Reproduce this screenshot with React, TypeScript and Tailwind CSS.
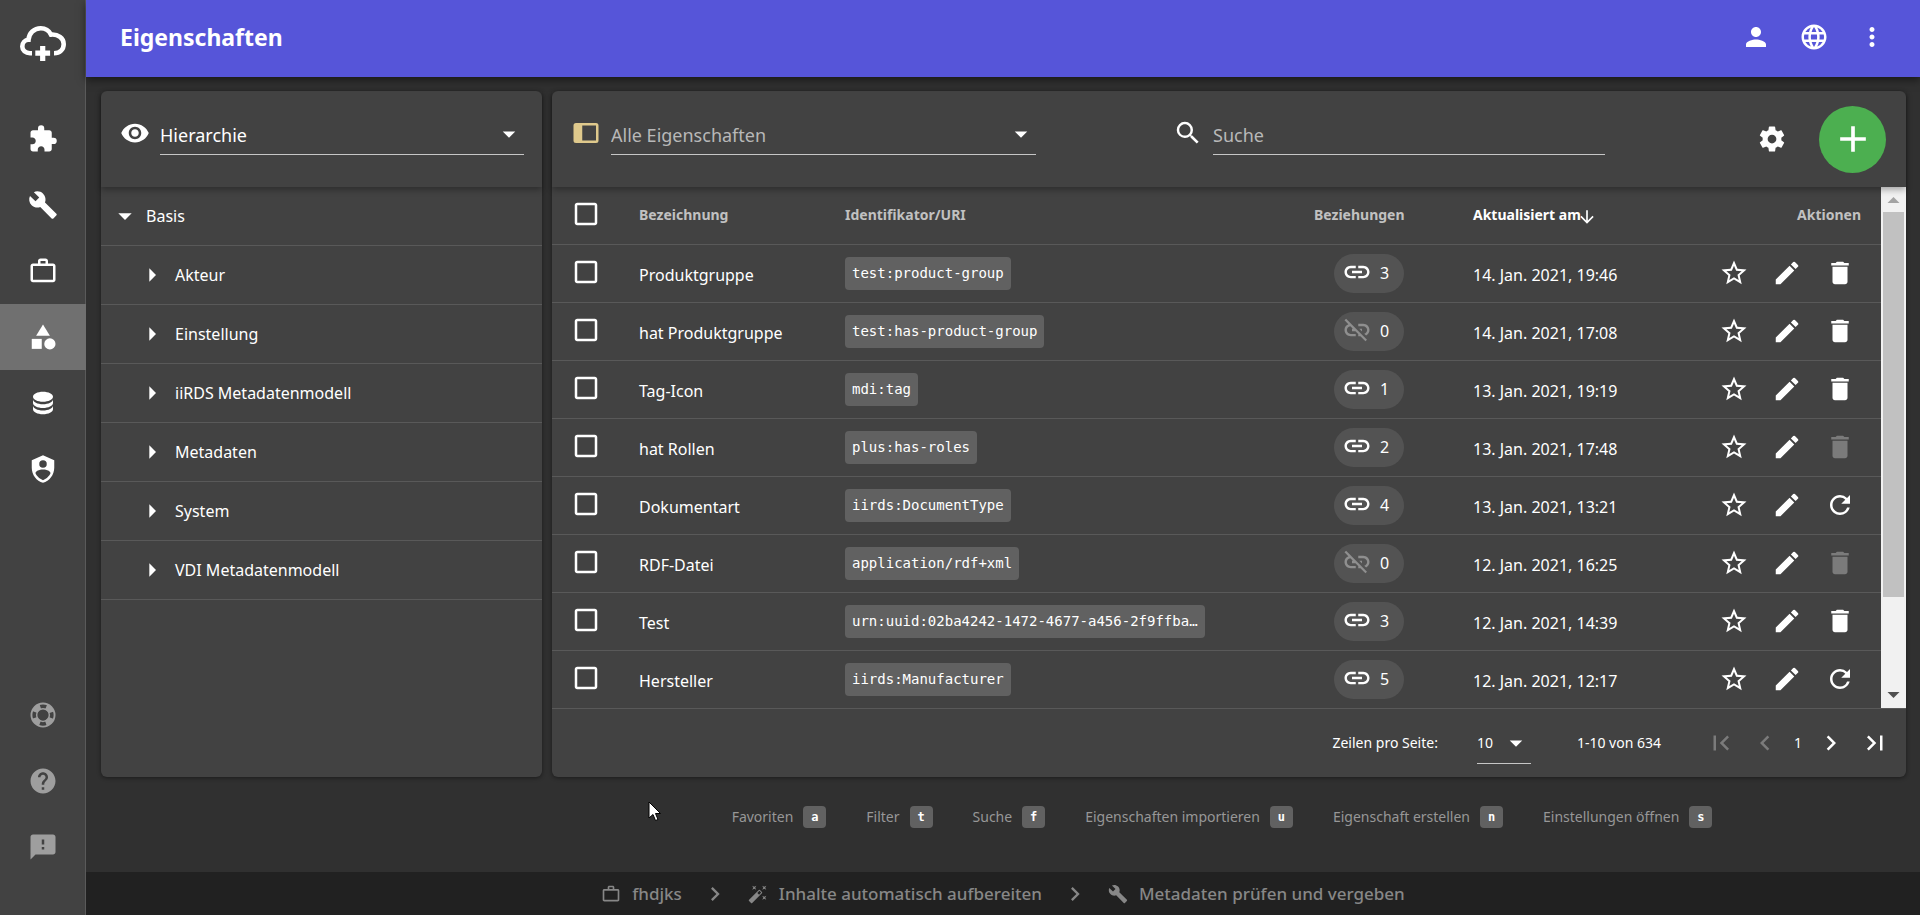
import React from "react";
import {
  MdExtension, MdBuild, MdCategory, MdHelp, MdFeedback, MdVisibility, MdArrowDropDown, MdArrowRight,
  MdSearch, MdAdd, MdStarBorder, MdEdit, MdDelete, MdRefresh, MdLink, MdLinkOff, MdLanguage, MdPerson, MdMoreVert,
  MdArrowDownward, MdFirstPage, MdLastPage, MdChevronLeft, MdChevronRight, MdAutoFixHigh, MdCheckBoxOutlineBlank,
} from "react-icons/md";

function Glyph({ d, className }: { d: string; className: string }) {
  return (
    <svg viewBox="0 0 24 24" fill="currentColor" className={className} aria-hidden="true">
      <path d={d} />
    </svg>
  );
}

const BRIEFCASE =
  "M20 6c.58 0 1.05.2 1.42.59.38.41.58.86.58 1.41v11c0 .55-.2 1-.58 1.41-.37.39-.84.59-1.42.59H4c-.58 0-1.05-.2-1.42-.59C2.2 20 2 19.55 2 19V8c0-.55.2-1 .58-1.41C2.95 6.2 3.42 6 4 6h4V4c0-.58.2-1.05.58-1.42C8.95 2.2 9.42 2 10 2h4c.58 0 1.05.2 1.42.58.38.37.58.84.58 1.42v2zM4 8v11h16V8zm10-2V4h-4v2z";
const DATABASE =
  "M12 3C7.58 3 4 4.79 4 7s3.58 4 8 4 8-1.79 8-4-3.58-4-8-4M4 9v3c0 2.21 3.58 4 8 4s8-1.79 8-4V9c0 2.21-3.58 4-8 4s-8-1.79-8-4m0 5v3c0 2.21 3.58 4 8 4s8-1.79 8-4v-3c0 2.21-3.58 4-8 4s-8-1.79-8-4z";
const SHIELD =
  "M12 1 3 5v6c0 5.55 3.84 10.74 9 12 5.16-1.26 9-6.45 9-12V5l-9-4m0 4a3 3 0 0 1 3 3 3 3 0 0 1-3 3 3 3 0 0 1-3-3 3 3 0 0 1 3-3m5.13 12A9.69 9.69 0 0 1 12 20.92 9.69 9.69 0 0 1 6.87 17c-.34-.5-.63-1-.87-1.53 0-1.65 2.71-3 6-3s6 1.32 6 3c-.24.53-.53 1.03-.87 1.53z";
const DOCK_LEFT = "M20 4H4a2 2 0 0 0-2 2v12a2 2 0 0 0 2 2h16a2 2 0 0 0 2-2V6a2 2 0 0 0-2-2m0 14H9V6h11z";
const COG =
  "M12 15.5A3.5 3.5 0 0 1 8.5 12 3.5 3.5 0 0 1 12 8.5a3.5 3.5 0 0 1 3.5 3.5 3.5 3.5 0 0 1-3.5 3.5m7.43-2.53c.04-.32.07-.64.07-.97 0-.33-.03-.66-.07-1l2.11-1.63c.19-.15.24-.42.12-.64l-2-3.46c-.12-.22-.39-.31-.61-.22l-2.49 1c-.52-.39-1.06-.73-1.69-.98l-.37-2.65A.506.506 0 0 0 14 2h-4c-.25 0-.46.18-.5.42l-.37 2.65c-.63.25-1.17.59-1.69.98l-2.49-1c-.22-.09-.49 0-.61.22l-2 3.46c-.13.22-.07.49.12.64L4.57 11c-.04.34-.07.67-.07 1 0 .33.03.65.07.97l-2.11 1.66c-.19.15-.25.42-.12.64l2 3.46c.12.22.39.3.61.22l2.49-1.01c.52.4 1.06.74 1.69.99l.37 2.65c.04.24.25.42.5.42h4c.25 0 .46-.18.5-.42l.37-2.65c.63-.26 1.17-.59 1.69-.99l2.49 1.01c.22.08.49 0 .61-.22l2-3.46c.12-.22.07-.49-.12-.64l-2.11-1.66z";

function CloudLogo() {
  return (
    <svg viewBox="0 0 46 36" className="h-9 w-[46px]" fill="none" aria-hidden="true">
      <path
        d="M12 27.2H10C5.5 27.2 2.3 24.5 2.3 20.5C2.3 16.5 5 14 8.5 13.8C9 7 14 2.3 20.8 2.3C25.5 2.3 29 4.6 31 8.6C38 8 43.7 12 43.7 18C43.7 23.5 40 27.2 34 27.2"
        stroke="currentColor"
        strokeWidth="4.6"
      />
      <path d="M22.7 20v15M15.3 27.2h14.8" stroke="currentColor" strokeWidth="5.2" />
    </svg>
  );
}

function Lifebuoy() {
  return (
    <svg viewBox="0 0 24 24" className="size-[30px]" fill="none" stroke="currentColor" aria-hidden="true">
      <circle cx="12" cy="12" r="9.25" strokeWidth="1.5" />
      <circle cx="12" cy="12" r="5.1" strokeWidth="1.2" />
      <circle cx="12" cy="12" r="7" strokeWidth="4.5" strokeDasharray="6.2 4.796" strokeDashoffset="-2.398" />
    </svg>
  );
}

const navItems = [
  { label: "Module", icon: <MdExtension className="size-[30px]" /> },
  { label: "Werkzeuge", icon: <MdBuild className="size-[30px]" /> },
  { label: "Projekte", icon: <Glyph d={BRIEFCASE} className="size-[30px]" /> },
  { label: "Eigenschaften", icon: <MdCategory className="size-[30px]" />, active: true },
  { label: "Daten", icon: <Glyph d={DATABASE} className="size-[30px]" /> },
  { label: "Benutzer", icon: <Glyph d={SHIELD} className="size-[30px]" /> },
];

const helpItems = [
  { label: "Support", icon: <Lifebuoy /> },
  { label: "Hilfe", icon: <MdHelp className="size-[30px]" /> },
  { label: "Feedback", icon: <MdFeedback className="size-[30px]" /> },
];

const treeItems = ["Akteur", "Einstellung", "iiRDS Metadatenmodell", "Metadaten", "System", "VDI Metadatenmodell"];

type Last = "delete" | "locked" | "refresh";
const rows: { name: string; uri: string; links: number; date: string; last: Last }[] = [
  { name: "Produktgruppe", uri: "test:product-group", links: 3, date: "14. Jan. 2021, 19:46", last: "delete" },
  { name: "hat Produktgruppe", uri: "test:has-product-group", links: 0, date: "14. Jan. 2021, 17:08", last: "delete" },
  { name: "Tag-Icon", uri: "mdi:tag", links: 1, date: "13. Jan. 2021, 19:19", last: "delete" },
  { name: "hat Rollen", uri: "plus:has-roles", links: 2, date: "13. Jan. 2021, 17:48", last: "locked" },
  { name: "Dokumentart", uri: "iirds:DocumentType", links: 4, date: "13. Jan. 2021, 13:21", last: "refresh" },
  { name: "RDF-Datei", uri: "application/rdf+xml", links: 0, date: "12. Jan. 2021, 16:25", last: "locked" },
  { name: "Test", uri: "urn:uuid:02ba4242-1472-4677-a456-2f9ffba…", links: 3, date: "12. Jan. 2021, 14:39", last: "delete" },
  { name: "Hersteller", uri: "iirds:Manufacturer", links: 5, date: "12. Jan. 2021, 12:17", last: "refresh" },
];

const shortcuts = [
  ["Favoriten", "a"],
  ["Filter", "t"],
  ["Suche", "f"],
  ["Eigenschaften importieren", "u"],
  ["Eigenschaft erstellen", "n"],
  ["Einstellungen öffnen", "s"],
];

function Check({ label }: { label: string }) {
  return (
    <label className="relative mb-[2px] block size-[30px] text-white">
      <input type="checkbox" aria-label={label} className="absolute inset-0 size-[30px] cursor-pointer appearance-none" />
      <MdCheckBoxOutlineBlank className="size-[30px]" />
    </label>
  );
}

function IconButton({ label, disabled, children }: { label: string; disabled?: boolean; children: React.ReactNode }) {
  return (
    <button type="button" aria-label={label} disabled={disabled} className="flex shrink-0 items-center justify-center disabled:text-[#7b7b7b]">
      {children}
    </button>
  );
}

function Sidebar() {
  return (
    <nav className="flex w-[86px] shrink-0 flex-col bg-[#424242] shadow-[inset_-1px_0_#5a5a5a]">
      <a href="#start" aria-label="Startseite" className="flex h-[106px] justify-center pt-[26px]">
        <CloudLogo />
      </a>
      {navItems.map((item) => (
        <a
          key={item.label}
          href="#nav"
          aria-label={item.label}
          className={item.active ? "flex h-[66px] items-center justify-center bg-[#707070]" : "flex h-[66px] items-center justify-center"}
        >
          {item.icon}
        </a>
      ))}
      <div className="mt-auto pb-[35px] text-[#9e9e9e]">
        {helpItems.map((item) => (
          <a key={item.label} href="#hilfe" aria-label={item.label} className="flex h-[66px] items-center justify-center">
            {item.icon}
          </a>
        ))}
      </div>
    </nav>
  );
}

function TopBar() {
  return (
    <header className="z-20 flex h-[77px] shrink-0 items-center justify-between bg-[#5655d9] pr-[33px] pb-[3px] pl-[34px] shadow-[0_3px_8px_rgba(0,0,0,0.5)]">
      <h1 className="text-[23px] font-bold">Eigenschaften</h1>
      <div className="flex gap-7">
        <IconButton label="Konto"><MdPerson className="size-[30px]" /></IconButton>
        <IconButton label="Sprache"><MdLanguage className="size-[30px]" /></IconButton>
        <IconButton label="Mehr"><MdMoreVert className="size-[30px]" /></IconButton>
      </div>
    </header>
  );
}

function SelectField({ id, label, value, muted, className }: { id: string; label: string; value: string; muted?: boolean; className: string }) {
  return (
    <div className={className}>
      <select
        id={id}
        aria-label={label}
        className={
          muted
            ? "h-10 w-full appearance-none border-b border-[#c6c6c6] bg-transparent text-lg text-[#b8b8b8] outline-none"
            : "h-10 w-full appearance-none border-b border-[#c6c6c6] bg-transparent text-lg outline-none"
        }
      >
        <option>{value}</option>
      </select>
      <MdArrowDropDown className="pointer-events-none absolute top-1 right-0 size-[30px]" />
    </div>
  );
}

function HierarchyPanel() {
  return (
    <aside className="flex w-[441px] shrink-0 flex-col rounded-md bg-[#424242] shadow-[0_1px_4px_rgba(0,0,0,0.45)]">
      <div className="z-10 flex h-24 shrink-0 items-center gap-[10px] pr-[18px] pl-[19px] shadow-[0_3px_6px_rgba(0,0,0,0.3)]">
        <MdVisibility className="mb-3 size-[30px] shrink-0" />
        <SelectField id="view" label="Ansicht" value="Hierarchie" className="relative mb-2 flex-1" />
      </div>
      <ul className="text-base">
        <li className="flex h-[59px] items-center border-b border-[#595959] pl-2">
          <button type="button" className="flex items-center gap-[5px]">
            <MdArrowDropDown className="size-8" />
            Basis
          </button>
        </li>
        {treeItems.map((item) => (
          <li key={item} className="flex h-[59px] items-center border-b border-[#595959] pl-[35px]">
            <button type="button" className="flex items-center gap-[7px]">
              <MdArrowRight className="size-8" />
              {item}
            </button>
          </li>
        ))}
      </ul>
    </aside>
  );
}

function Toolbar() {
  return (
    <div className="z-10 flex h-24 shrink-0 items-center pr-5 pl-[19px] shadow-[0_3px_6px_rgba(0,0,0,0.3)]">
      <Glyph d={DOCK_LEFT} className="mb-3 size-[30px] shrink-0 text-[#dfc98c]" />
      <SelectField id="filter" label="Filter" value="Alle Eigenschaften" muted className="relative mb-2 ml-[10px] w-[425px]" />
      <div className="mb-2 ml-[137px] flex flex-1 items-center gap-[10px]">
        <MdSearch className="mb-1 size-[30px] shrink-0" />
        <input
          type="search"
          aria-label="Suche"
          placeholder="Suche"
          className="h-10 w-full max-w-[392px] border-b border-[#c6c6c6] bg-transparent text-lg outline-none placeholder:text-[#b8b8b8]"
        />
      </div>
      <IconButton label="Einstellungen öffnen"><Glyph d={COG} className="size-[30px]" /></IconButton>
      <button type="button" aria-label="Eigenschaft erstellen" className="ml-8 flex size-[67px] items-center justify-center rounded-full bg-[#4caf50]">
        <MdAdd className="size-11" />
      </button>
    </div>
  );
}

function PropertyTable() {
  return (
    <table className="flex-1 table-fixed border-collapse text-left">
      <colgroup>
        <col className="w-[87px]" />
        <col className="w-[206px]" />
        <col />
        <col className="w-[159px]" />
        <col className="w-[232px]" />
        <col className="w-[176px]" />
      </colgroup>
      <thead>
        <tr className="h-[57px] border-b border-[#595959] text-sm text-[#c1c1c1]">
          <th className="pl-[19px]"><Check label="Alle auswählen" /></th>
          <th className="font-bold">Bezeichnung</th>
          <th className="font-bold">Identifikator/URI</th>
          <th className="font-bold">Beziehungen</th>
          <th className="font-bold text-white">
            <button type="button" className="flex items-center font-bold">
              Aktualisiert am
              <MdArrowDownward className="mt-1 -ml-1 size-5" />
            </button>
          </th>
          <th className="pr-5 text-right font-bold">Aktionen</th>
        </tr>
      </thead>
      <tbody>
        {rows.map((row) => (
          <tr key={row.name} className="h-[58px] border-b border-[#595959] text-base">
            <td className="pl-[19px]"><Check label={row.name} /></td>
            <td className="pt-[3px]">{row.name}</td>
            <td>
              <code className="inline-flex h-[33px] items-center rounded bg-[#616161] px-[7px] font-['DejaVu_Sans_Mono',monospace] text-sm">{row.uri}</code>
            </td>
            <td className="pl-5">
              <span className="flex h-[39px] w-[70px] items-center gap-2 rounded-full bg-[#535353] pl-2">
                {row.links ? <MdLink className="mb-[2px] size-[30px]" /> : <MdLinkOff className="mb-[2px] size-[30px] text-[#8f8f8f]" />}
                {row.links}
              </span>
            </td>
            <td className="pt-[3px]">{row.date}</td>
            <td className="pr-[26px]">
              <div className="flex justify-end gap-[23px]">
                <IconButton label="Favorit"><MdStarBorder className="size-[30px]" /></IconButton>
                <IconButton label="Bearbeiten"><MdEdit className="size-[30px]" /></IconButton>
                {row.last === "refresh" ? (
                  <IconButton label="Zurücksetzen"><MdRefresh className="size-[30px]" /></IconButton>
                ) : (
                  <IconButton label="Löschen" disabled={row.last === "locked"}><MdDelete className="size-[30px]" /></IconButton>
                )}
              </div>
            </td>
          </tr>
        ))}
      </tbody>
    </table>
  );
}

function ScrollTrack() {
  return (
    <div className="flex w-[25px] shrink-0 flex-col items-center bg-[#f1f1f1] px-[2px]" aria-hidden="true">
      <svg viewBox="0 0 25 25" className="size-[25px] shrink-0"><path d="M6.5 16h12l-6-6z" fill="#a3a3a3" /></svg>
      <div className="h-[385px] w-full bg-[#c1c1c1]" />
      <svg viewBox="0 0 25 25" className="mt-auto size-[25px] shrink-0"><path d="M6.5 9h12l-6 6z" fill="#505050" /></svg>
    </div>
  );
}

function Pagination() {
  return (
    <div className="flex h-[69px] items-center justify-end border-t border-[#595959] pr-4 text-sm">
      <label htmlFor="page-size">Zeilen pro Seite:</label>
      <div className="relative ml-[39px]">
        <select id="page-size" className="h-[41px] w-[54px] appearance-none border-b border-[#c6c6c6] bg-transparent outline-none">
          <option>10</option>
        </select>
        <MdArrowDropDown className="pointer-events-none absolute top-[5px] right-0 size-[30px]" />
      </div>
      <span className="ml-[46px]">1-10 von 634</span>
      <div className="ml-[45px] flex items-center gap-[14px]">
        <IconButton label="Erste Seite" disabled><MdFirstPage className="size-[30px]" /></IconButton>
        <IconButton label="Vorherige Seite" disabled><MdChevronLeft className="size-[30px]" /></IconButton>
        <span>1</span>
        <IconButton label="Nächste Seite"><MdChevronRight className="size-[30px]" /></IconButton>
        <IconButton label="Letzte Seite"><MdLastPage className="size-[30px]" /></IconButton>
      </div>
    </div>
  );
}

export default function App() {
  return (
    <div className="flex min-h-screen bg-[#303030] font-['Noto_Sans',sans-serif] text-white">
      <Sidebar />
      <div className="relative flex min-w-0 flex-1 flex-col">
        <TopBar />
        <main className="flex gap-[10px] px-[14px] pt-[14px] pl-[15px]">
          <HierarchyPanel />
          <section className="flex min-w-0 flex-1 flex-col rounded-md bg-[#424242] shadow-[0_1px_4px_rgba(0,0,0,0.45)]">
            <Toolbar />
            <div className="flex h-[521px] overflow-hidden">
              <PropertyTable />
              <ScrollTrack />
            </div>
            <Pagination />
          </section>
        </main>
        <div className="mt-[29px] flex items-center justify-center gap-10 pl-[438px] text-sm text-[#979797]">
          {shortcuts.map(([label, key]) => (
            <span key={key} className="flex items-center gap-[10px]">
              {label}
              <kbd className="flex h-[22px] w-[23px] items-center justify-center rounded bg-[#616161] font-['DejaVu_Sans_Mono',monospace] text-xs font-bold text-white">
                {key}
              </kbd>
            </span>
          ))}
        </div>
        <svg viewBox="0 0 14 22" className="absolute top-[801px] left-[562px] h-[22px] w-[14px]" aria-hidden="true">
          <path d="M1 1v16l4-3.5 2.5 6 2.5-1-2.5-6h5z" fill="#fff" stroke="#000" />
        </svg>
        <footer className="mt-auto flex h-[43px] items-center justify-center bg-[#212121] text-[17px] font-medium text-[#878787]">
          <a href="#projekt" className="flex items-center gap-[11px]"><Glyph d={BRIEFCASE} className="size-5" />fhdjks</a>
          <MdChevronRight className="mx-[19px] size-7" />
          <a href="#inhalte" className="flex items-center gap-[11px]"><MdAutoFixHigh className="size-5" />Inhalte automatisch aufbereiten</a>
          <MdChevronRight className="mx-[19px] size-7" />
          <a href="#metadaten" className="flex items-center gap-[11px]"><MdBuild className="size-5" />Metadaten prüfen und vergeben</a>
        </footer>
      </div>
    </div>
  );
}
